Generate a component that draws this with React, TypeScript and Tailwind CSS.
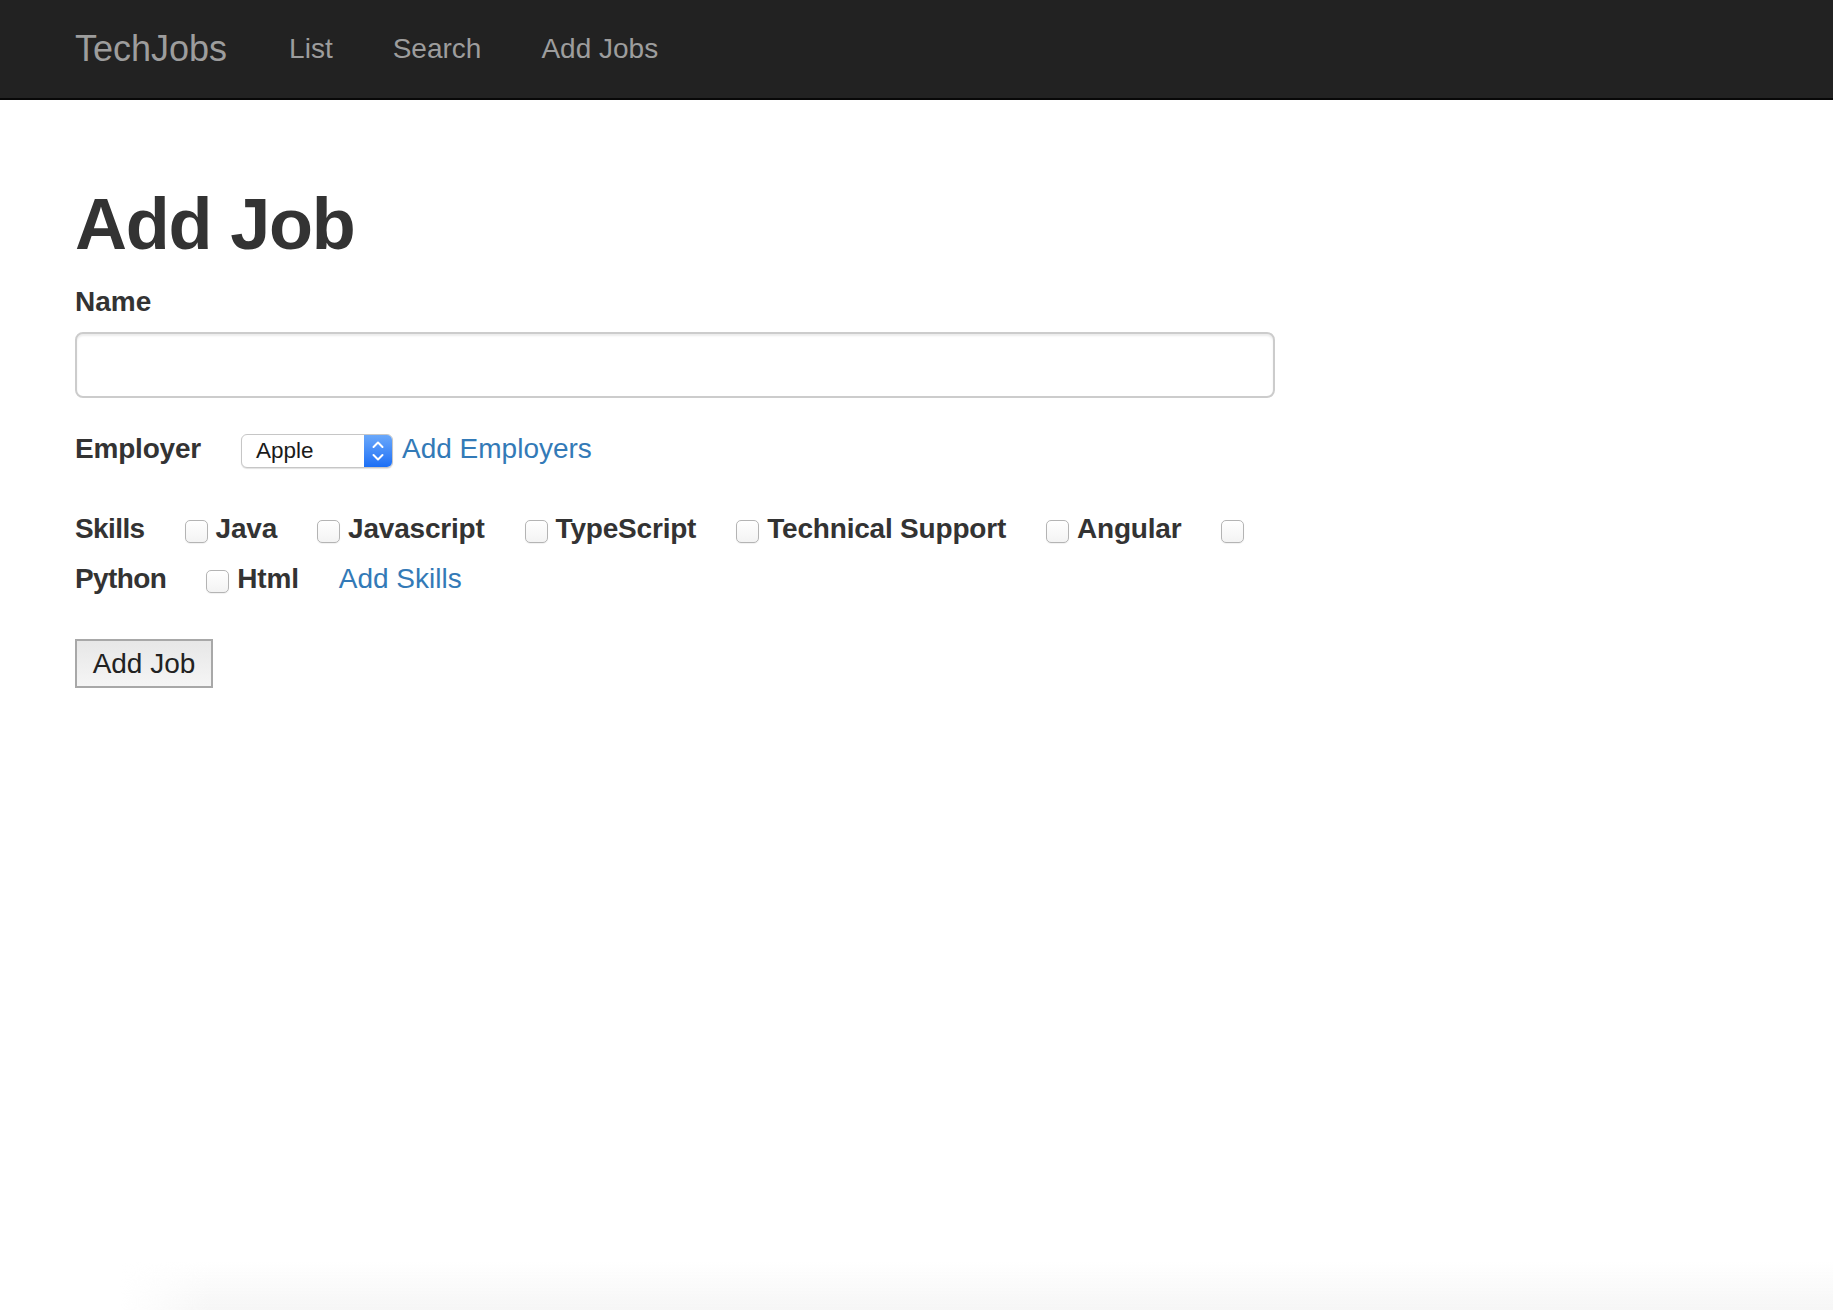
import React from "react";

const font = { fontFamily: '"Liberation Sans", Arial, Helvetica, sans-serif' };

function Checkbox() {
  return (
    <span className="inline-block w-[23px] h-[23px] mt-[4px] rounded-[5px] border-[1.5px] border-[#b4b4b4] bg-linear-to-b from-white to-[#f3f3f3] shadow-[0_1px_1px_rgba(0,0,0,0.06)] shrink-0" />
  );
}

function SelectBox() {
  return (
    <div className="flex h-[34px] w-[152px] mt-[4px] rounded-[6px] border border-[#c6c6c6] shadow-[0_1px_1px_rgba(0,0,0,0.12)] bg-white overflow-hidden shrink-0">
      <div className="flex-1 flex items-center pl-[14px] text-[22.5px] text-[#1a1a1a] leading-none">Apple</div>
      <div className="w-[28px] h-full bg-linear-to-b from-[#6aa8fa] to-[#1a6ef5] flex items-center justify-center">
        <svg width="28" height="34" viewBox="0 0 28 34" fill="none">
          <path d="M9.5 13 L14 8.5 L18.5 13" stroke="white" strokeWidth="2" strokeLinecap="round" strokeLinejoin="round" />
          <path d="M9.5 21 L14 25.5 L18.5 21" stroke="white" strokeWidth="2" strokeLinecap="round" strokeLinejoin="round" />
        </svg>
      </div>
    </div>
  );
}

function Skill({ name, last }: { name: string; last?: boolean }) {
  return (
    <>
      <Checkbox />
      <span className={"ml-[8px] font-bold tracking-[-0.2px] " + (last ? "" : "mr-[40px]")}>{name}</span>
    </>
  );
}

export default function App() {
  return (
    <div className="relative min-h-[1310px] bg-white text-[#333333] overflow-hidden" style={font}>
      <nav className="h-[100px] bg-[#222222] border-b-2 border-[#080808] flex items-center px-[75px]">
        <span className="text-[36px] leading-[40px] text-[#9d9d9d] pr-[32px]">TechJobs</span>
        <span className="text-[28px] leading-[40px] text-[#9d9d9d] px-[30px]">List</span>
        <span className="text-[28px] leading-[40px] text-[#9d9d9d] px-[30px]">Search</span>
        <span className="text-[28px] leading-[40px] text-[#9d9d9d] px-[30px]">Add Jobs</span>
      </nav>

      <main className="px-[75px] pt-[85px]">
        <h1 className="text-[72px] leading-[79px] font-bold tracking-[-1.2px] text-[#333333]">Add Job</h1>

        <div className="mt-[18px] text-[28px] leading-[40px] font-bold">Name</div>
        <div className="mt-[10px] w-[1200px] h-[66px] rounded-[8px] border-2 border-[#cccccc] bg-white shadow-[inset_0_2px_2px_rgba(0,0,0,0.075)]" />

        <div className="mt-[31px] flex items-center h-[40px] text-[28px] leading-[40px]">
          <span className="font-bold tracking-[-0.2px] mr-[40px]">Employer</span>
          <SelectBox />
          <span className="ml-[9px] text-[#337ab7]">Add Employers</span>
        </div>

        <div className="mt-[40px] w-[1200px] text-[28px] leading-[40px]">
          <div className="flex items-center h-[40px]">
            <span className="font-bold tracking-[-0.6px] mr-[40px]">Skills</span>
            <Skill name="Java" />
            <Skill name="Javascript" />
            <Skill name="TypeScript" />
            <Skill name="Technical Support" />
            <Skill name="Angular" />
            <Checkbox />
          </div>
          <div className="mt-[10px] flex items-center h-[40px]">
            <span className="font-bold tracking-[-0.6px] mr-[40px]">Python</span>
            <Skill name="Html" />
            <span className="text-[#337ab7]">Add Skills</span>
          </div>
        </div>

        <button className="mt-[40px] h-[49px] w-[138px] border-2 border-[#a8a8a8] bg-linear-to-b from-[#e7e7e7] to-[#f5f5f5] text-[28px] leading-none text-[#222222]">
          Add Job
        </button>
      </main>

      <div className="absolute bottom-0 left-[120px] right-0 h-[48px] bg-linear-to-b from-transparent to-[#f6f6f6] [mask-image:linear-gradient(to_right,transparent,black_90px)]" />
    </div>
  );
}
